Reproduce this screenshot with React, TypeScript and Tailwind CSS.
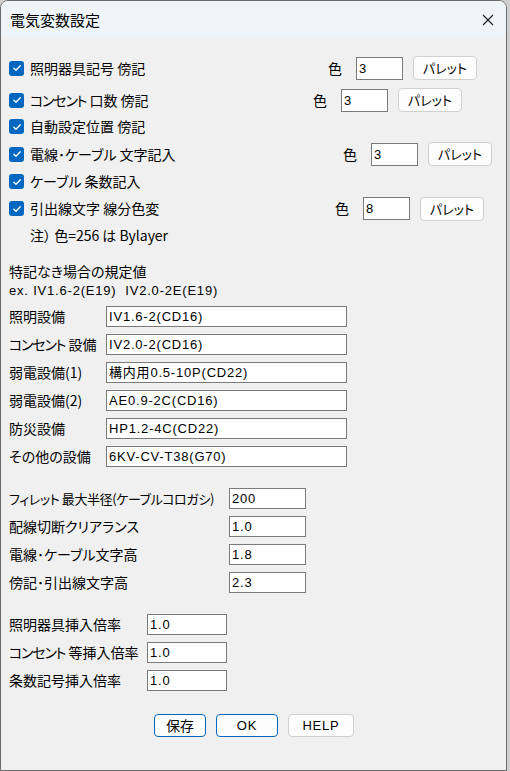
import React from 'react';

const JP = "font-['Noto_Sans_CJK_JP','Noto_Sans',sans-serif] [font-feature-settings:'palt']";
const FIELD = "font-['Liberation_Sans','Noto_Sans_CJK_JP',sans-serif] tracking-[0.8px]";

function Check() {
  return (
    <span className="w-[15px] h-[15px] rounded-[3px] bg-[#0067c0] flex items-center justify-center shrink-0">
      <svg width="10" height="10" viewBox="0 0 10 10" fill="none">
        <path d="M1.8 5.2 L4 7.3 L8.3 2.8" stroke="white" strokeWidth="1.3" strokeLinecap="round" strokeLinejoin="round" />
      </svg>
    </span>
  );
}

function Field({ value, w, h = 21 }: { value: string; w: number; h?: number }) {
  return (
    <div
      className={`${FIELD} bg-white border border-[#7a7a7a] text-[13px] text-black leading-none flex items-center pl-[2px] whitespace-nowrap overflow-hidden`}
      style={{ width: w, height: h }}
    >
      {value}
    </div>
  );
}

function ColorGroup({ value }: { value: string }) {
  return (
    <div className="flex items-center">
      <span className="w-[14px] text-[14px]">色</span>
      <div className="ml-[14px]">
        <Field value={value} w={47} h={23} />
      </div>
      <button className="ml-[10px] w-[64px] h-[24px] rounded-[4px] bg-[#fdfdfd] border border-[#d0d0d0] text-[13px] text-black flex items-center justify-center">
        パレット
      </button>
    </div>
  );
}

// katakana in the original font run narrower, squeeze the "コンセント" word
function Label({ text }: { text: string }) {
  if (!text.startsWith('コンセント')) return <>{text}</>;
  return (
    <>
      <span className="tracking-[-1.2px]">コンセント</span>
      {text.slice(5)}
    </>
  );
}

type CheckRow = { label: string; left?: number; color?: string; h: number; mt?: number };

const checkRows: CheckRow[] = [
  { label: '照明器具記号 傍記', left: 319, color: '3', h: 26 },
  { label: 'コンセント 口数 傍記', left: 304, color: '3', h: 26, mt: 6 },
  { label: '自動設定位置 傍記', h: 27 },
  { label: '電線･ケーブル 文字記入', left: 334, color: '3', h: 28 },
  { label: 'ケーブル 条数記入', h: 27 },
  { label: '引出線文字 線分色変', left: 326, color: '8', h: 27 },
];

const defaults: Array<[string, string]> = [
  ['照明設備', 'IV1.6-2(CD16)'],
  ['コンセント 設備', 'IV2.0-2(CD16)'],
  ['弱電設備(1)', '構内用0.5-10P(CD22)'],
  ['弱電設備(2)', 'AE0.9-2C(CD16)'],
  ['防災設備', 'HP1.2-4C(CD22)'],
  ['その他の設備', '6KV-CV-T38(G70)'],
];

const sizes: Array<[string, string]> = [
  ['フィレット 最大半径(ケーブルコロガシ)', '200'],
  ['配線切断クリアランス', '1.0'],
  ['電線･ケーブル文字高', '1.8'],
  ['傍記･引出線文字高', '2.3'],
];

const scales: Array<[string, string]> = [
  ['照明器具挿入倍率', '1.0'],
  ['コンセント 等挿入倍率', '1.0'],
  ['条数記号挿入倍率', '1.0'],
];

function InputList({ rows, labelW, fieldW }: { rows: Array<[string, string]>; labelW: number; fieldW: number }) {
  return (
    <div className="flex flex-col gap-[7px]">
      {rows.map(([label, value]) => (
        <div key={label} className="flex items-center h-[21px]">
          <span
            className={`whitespace-nowrap overflow-hidden ${label.length > 16 ? 'text-[13px] tracking-[-0.4px]' : 'text-[14px]'}`}
            style={{ width: labelW }}
          >
            <Label text={label} />
          </span>
          <Field value={value} w={fieldW} />
        </div>
      ))}
    </div>
  );
}

export default function App() {
  return (
    <div className="w-[510px] h-[771px] bg-[#cfcfcf] overflow-hidden">
      <div className={`${JP} w-[507px] h-[771px] bg-[#f0f0f0] rounded-t-[8px] border border-[#6a6a6a] overflow-hidden flex flex-col text-black`}>
        {/* title bar */}
        <div className="h-[36px] bg-[#eff4f9] flex items-center justify-between pl-[9px] pr-[12px] shrink-0">
          <span className="text-[15px] mt-[2px]">電気変数設定</span>
          <svg width="12" height="12" viewBox="0 0 12 12" className="mt-[2px]">
            <path d="M1 1 L11 11 M11 1 L1 11" stroke="#1a1a1a" strokeWidth="1.1" />
          </svg>
        </div>

        <div className="flex flex-col pl-[8px] pt-[18px]">
          {checkRows.map(r => (
            <div key={r.label} className="flex items-center" style={{ height: r.h, marginTop: r.mt ?? 0 }}>
              <div className="flex items-center" style={{ width: r.left }}>
                <Check />
                <span className="ml-[6px] text-[14px] whitespace-nowrap"><Label text={r.label} /></span>
              </div>
              {r.color && <ColorGroup value={r.color} />}
            </div>
          ))}
          <div className="h-[27px] flex items-center pl-[21px] text-[14px]">
            注）&nbsp;色=256 は Bylayer
          </div>

          <div className="h-[20px] mt-[12px] flex items-center text-[14px]">特記なき場合の規定値</div>
          <div className={`h-[20px] flex items-center text-[13px] ${FIELD}`}>ex. IV1.6-2(E19)&nbsp;&nbsp;IV2.0-2E(E19)</div>

          <div className="mt-[5px]">
            <InputList rows={defaults} labelW={97} fieldW={241} />
          </div>

          <div className="mt-[21px]">
            <InputList rows={sizes} labelW={220} fieldW={77} />
          </div>

          <div className="mt-[21px]">
            <InputList rows={scales} labelW={138} fieldW={80} />
          </div>

          <div className="mt-[23px] flex items-center pl-[145px] gap-[10px]">
            <button className="w-[52px] h-[23px] rounded-[4px] bg-[#fdfdfd] border border-[#0067c0] text-[14px] flex items-center justify-center">保存</button>
            <button className={`${FIELD} w-[62px] h-[23px] rounded-[4px] bg-[#fdfdfd] border border-[#0067c0] text-[13px] flex items-center justify-center`}>OK</button>
            <button className={`${FIELD} w-[66px] h-[23px] rounded-[4px] bg-[#fdfdfd] border border-[#d0d0d0] text-[13px] flex items-center justify-center`}>HELP</button>
          </div>
        </div>
      </div>
    </div>
  );
}
